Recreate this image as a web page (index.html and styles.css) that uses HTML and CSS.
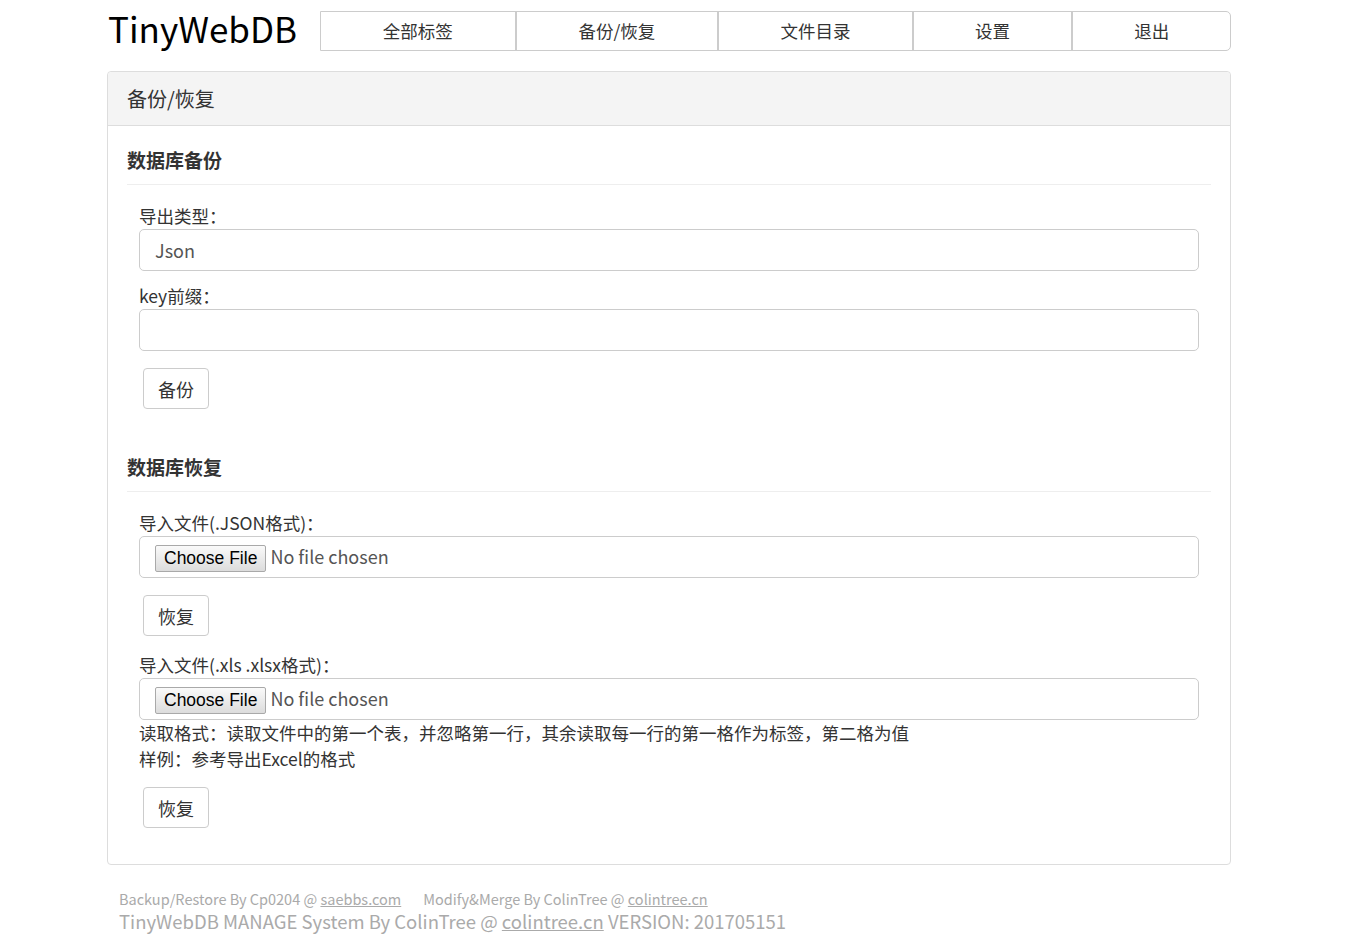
FILE: index.html
```html
<!DOCTYPE html>
<html lang="zh-CN">
<head>
<meta charset="utf-8">
<title>TinyWebDB - 备份/恢复</title>
<link rel="stylesheet" href="styles.css">
</head>
<body>
<div class="container">
  <header class="header">
    <h1 class="brand">TinyWebDB</h1>
    <nav class="nav">
      <a href="#">全部标签</a>
      <a href="#">备份/恢复</a>
      <a href="#">文件目录</a>
      <a href="#">设置</a>
      <a href="#">退出</a>
    </nav>
  </header>

  <section class="panel">
    <div class="panel-heading">备份/恢复</div>
    <div class="panel-body">
      <h3 class="section-title">数据库备份</h3>
      <form class="form">
        <div class="field">
          <label>导出类型：</label>
          <div class="control">Json</div>
        </div>
        <div class="field">
          <label>key前缀：</label>
          <input class="control" type="text">
        </div>
        <div class="btn-row"><button type="button" class="btn">备份</button></div>
      </form>

      <h3 class="section-title second">数据库恢复</h3>
      <form class="form">
        <div class="field">
          <label>导入文件(.JSON格式)：</label>
          <div class="control file-box"><input type="file" class="file"></div>
        </div>
        <div class="btn-row"><button type="button" class="btn">恢复</button></div>
        <div class="field">
          <label>导入文件(.xls .xlsx格式)：</label>
          <div class="control file-box"><input type="file" class="file"></div>
          <p class="help">读取格式：读取文件中的第一个表，并忽略第一行，其余读取每一行的第一格作为标签，第二格为值<br>样例：参考导出Excel的格式</p>
        </div>
        <div class="btn-row after-help"><button type="button" class="btn">恢复</button></div>
      </form>
    </div>
  </section>

  <footer class="footer">
    <div class="credits"><span class="credit">Backup/Restore By Cp0204 @ <a href="#">saebbs.com</a></span><span class="credit">Modify&amp;Merge By ColinTree @ <a href="#">colintree.cn</a></span></div>
    <div class="version">TinyWebDB MANAGE System By ColinTree @ <a href="#">colintree.cn</a> VERSION: 201705151</div>
  </footer>
</div>
</body>
</html>
```

FILE: styles.css
```css
* { box-sizing: border-box; }

body {
  margin: 0;
  background: #fff;
  color: #333;
  font-family: "Noto Sans CJK SC", "Noto Sans", sans-serif;
  font-size: 17.5px;
}

.container {
  width: 1124px;
  margin-left: 107px;
}

.header {
  display: flex;
  align-items: center;
  padding-top: 11px;
  height: 51px;
}

.brand {
  margin: 0 25px 0 1px;
  width: 187px;
  font-size: 35px;
  font-weight: normal;
  color: #000;
  line-height: 40px;
  position: relative;
  top: -3px;
  white-space: nowrap;
}

.nav {
  flex: 1;
  display: grid;
  grid-template-columns: 194fr 203fr 195fr 160fr 159fr;
  height: 40px;
  border: 1px solid #ccc;
  border-radius: 0 5px 5px 0;
}

.nav a {
  display: flex;
  align-items: center;
  justify-content: center;
  color: #333;
  text-decoration: none;
  font-size: 17.5px;
  border-left: 2px solid #ccc;
  padding-bottom: 1px;
}

.nav a:first-child { border-left: none; }

.panel {
  margin-top: 20px;
  border: 1px solid #ddd;
  border-radius: 4px;
}

.panel-heading {
  height: 54px;
  padding: 0 19px;
  display: flex;
  align-items: center;
  background: #f4f4f4;
  border-bottom: 1px solid #ddd;
  font-size: 20px;
  color: #333;
  border-radius: 4px 4px 0 0;
}

.panel-body {
  padding: 19px 19px 20px;
}

.section-title {
  margin: 0 0 18px;
  font-size: 19px;
  font-weight: bold;
  line-height: 30px;
  padding-bottom: 9px;
  border-bottom: 1px solid #eee;
  color: #333;
}

.section-title.second { margin-top: 43px; }

.form {
  padding: 0 12px;
}

.field + .field { margin-top: 12px; }

.field label {
  display: block;
  line-height: 26px;
  font-size: 17.5px;
  color: #333;
}

.control {
  display: flex;
  align-items: center;
  width: 100%;
  height: 42px;
  padding: 0 15px;
  border: 1px solid #ccc;
  border-radius: 5px;
  font-family: inherit;
  font-size: 18px;
  color: #555;
  background: #fff;
}

input.control { display: block; }

.file {
  font-family: inherit;
  font-size: 18px;
  color: #555;
}

.file::file-selector-button {
  font-family: "Liberation Sans", Arial, sans-serif;
  font-size: 17.5px;
  color: #000;
  height: 27px;
  padding: 0 8px;
  margin-right: 4px;
  border: 1px solid #a9a9a9;
  border-radius: 2px;
  background: linear-gradient(#fafafa, #dcdcdc);
}

.help {
  margin: 0;
  line-height: 26px;
  font-size: 17.5px;
  color: #333;
}

.btn-row {
  margin: 17px 0 16px 4px;
}

.btn-row.after-help { margin-top: 15px; }

.btn {
  height: 41px;
  width: 66px;
  font-family: inherit;
  font-size: 18px;
  color: #333;
  background: #fff;
  border: 1px solid #ccc;
  border-radius: 4px;
  padding: 0;
}

.footer {
  padding: 24px 12px 0;
  color: #aaa;
}

.footer a { color: #aaa; }

.credits {
  font-size: 14.5px;
  line-height: 20px;
}

.credit + .credit { margin-left: 22px; }

.version {
  font-size: 18.5px;
  line-height: 25px;
}
```
